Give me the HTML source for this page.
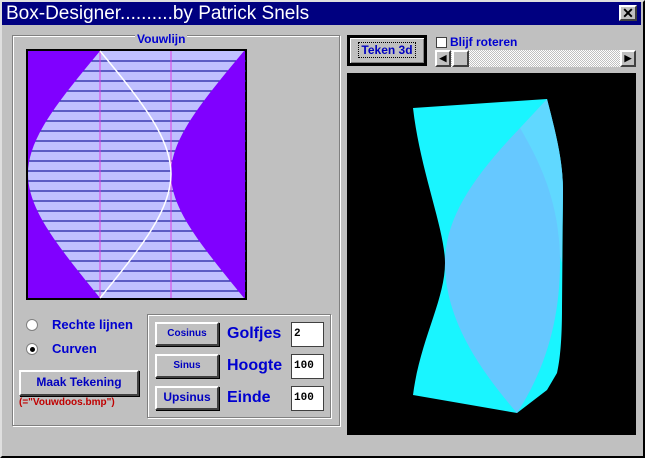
<!DOCTYPE html>
<html><head><style>
*{margin:0;padding:0;box-sizing:border-box}
body{width:645px;height:458px;background:#000;overflow:hidden;font-family:"Liberation Sans",sans-serif;position:relative}
.win{position:absolute;left:0;top:0;width:645px;height:458px;background:#c0c0c0;border:2px solid;border-color:#dfdfdf #000 #000 #dfdfdf}
.in{position:absolute;left:-2px;top:-2px;width:645px;height:458px}
.a{position:absolute}
.title{left:2px;top:2px;width:639px;height:23px;background:#000080;color:#fff;font-size:19px;line-height:23px;padding-left:4px}
.btn{position:absolute;background:#c0c0c0;border:2px solid;border-color:#fff #404040 #404040 #fff;box-shadow:1px 1px 0 #000;color:#0000c0;font-weight:bold;text-align:center;font-size:11px}
.grp{position:absolute;border:1px solid #808080;box-shadow:1px 1px 0 #fff,inset 1px 1px 0 #fff}
.lbl{position:absolute;color:#0000d0;font-weight:bold}
.inp{position:absolute;background:#fff;border:1px solid #404040;width:33px;height:25px;font-size:11px;font-weight:bold;font-family:"Liberation Mono",monospace;padding:5px 2px}
.radio{position:absolute;width:12px;height:12px;border-radius:50%;background:#fff;border:1px solid #808080}
</style></head><body>
<div class="win"><div class="in">
<div class="a title">Box-Designer..........by Patrick Snels</div>
<div class="btn" style="left:619px;top:5px;width:18px;height:16px;color:#000;font-size:14px;line-height:12px;box-shadow:none">✕</div>

<div class="grp" style="left:12px;top:35px;width:328px;height:391px"></div>
<div class="lbl" style="left:135px;top:32px;font-size:12px;background:#c0c0c0;padding:0 2px">Vouwlijn</div>
<svg class="a" style="left:26px;top:49px" width="221" height="251">
<rect x="1" y="1" width="219" height="249" fill="#c0c0ff" stroke="#000" stroke-width="2"/>
<g stroke="#2020a0" stroke-width="1.3">
<line x1="2" x2="220" y1="12" y2="12"/><line x1="2" x2="220" y1="22" y2="22"/><line x1="2" x2="220" y1="32" y2="32"/><line x1="2" x2="220" y1="42" y2="42"/><line x1="2" x2="220" y1="52" y2="52"/><line x1="2" x2="220" y1="62" y2="62"/><line x1="2" x2="220" y1="72" y2="72"/><line x1="2" x2="220" y1="82" y2="82"/><line x1="2" x2="220" y1="92" y2="92"/><line x1="2" x2="220" y1="102" y2="102"/><line x1="2" x2="220" y1="112" y2="112"/><line x1="2" x2="220" y1="122" y2="122"/><line x1="2" x2="220" y1="132" y2="132"/><line x1="2" x2="220" y1="142" y2="142"/><line x1="2" x2="220" y1="152" y2="152"/><line x1="2" x2="220" y1="162" y2="162"/><line x1="2" x2="220" y1="172" y2="172"/><line x1="2" x2="220" y1="182" y2="182"/><line x1="2" x2="220" y1="192" y2="192"/><line x1="2" x2="220" y1="202" y2="202"/><line x1="2" x2="220" y1="212" y2="212"/><line x1="2" x2="220" y1="222" y2="222"/><line x1="2" x2="220" y1="232" y2="232"/><line x1="2" x2="220" y1="242" y2="242"/>
</g>
<path d="M2 2 L74 2 C30 55 2 90 2 125 C2 160 30 195 74 249 L2 249Z" fill="#8000ff"/>
<path d="M219 2 L218 2 C174 55 145 90 145 125 C145 160 174 195 218 249 L219 249Z" fill="#8000ff"/>
<line x1="74" y1="2" x2="74" y2="249" stroke="#e040e0"/>
<line x1="145" y1="2" x2="145" y2="249" stroke="#e040e0"/>
<path d="M74 2 C118 55 145 90 145 125 C145 160 118 195 74 249" fill="none" stroke="#fff" stroke-width="1.5"/>
</svg>

<div class="radio" style="left:26px;top:319px"></div>
<div class="lbl" style="left:52px;top:317px;font-size:13px">Rechte lijnen</div>
<div class="radio" style="left:26px;top:343px"></div>
<div class="a" style="left:30px;top:347px;width:5px;height:5px;border-radius:50%;background:#000"></div>
<div class="lbl" style="left:52px;top:341px;font-size:13px">Curven</div>
<div class="btn" style="left:19px;top:370px;width:120px;height:26px;font-size:12px;line-height:21px">Maak Tekening</div>
<div class="a" style="left:19px;top:397px;color:#c00000;font-size:10px;font-weight:bold">(="Vouwdoos.bmp")</div>

<div class="grp" style="left:147px;top:314px;width:184px;height:104px"></div>
<div class="btn" style="left:155px;top:322px;width:64px;height:24px;line-height:19px;font-size:10px">Cosinus</div>
<div class="btn" style="left:155px;top:354px;width:64px;height:24px;line-height:19px;font-size:10px">Sinus</div>
<div class="btn" style="left:155px;top:386px;width:64px;height:24px;line-height:19px;font-size:12px">Upsinus</div>
<div class="lbl" style="left:227px;top:325px;font-size:16px">Golfjes</div>
<div class="lbl" style="left:227px;top:357px;font-size:16px">Hoogte</div>
<div class="lbl" style="left:227px;top:389px;font-size:16px">Einde</div>
<div class="inp" style="left:291px;top:322px">2</div>
<div class="inp" style="left:291px;top:354px">100</div>
<div class="inp" style="left:291px;top:386px">100</div>

<div class="btn" style="left:347px;top:35px;width:80px;height:31px;border:3px solid #000;box-shadow:inset 1px 1px 0 #fff,inset -1px -1px 0 #808080;line-height:24px;font-size:12px"><span style="border:1px dotted #000;padding:0 2px">Teken 3d</span></div>
<div class="a" style="left:436px;top:37px;width:11px;height:11px;background:#fff;border:1px solid #404040"></div>
<div class="lbl" style="left:450px;top:35px;font-size:12px">Blijf roteren</div>
<div class="a" style="left:435px;top:50px;width:201px;height:17px;background:repeating-conic-gradient(#c0c0c0 0 25%,#fff 0 50%) 0 0/2px 2px"></div>
<div class="btn" style="left:435px;top:50px;width:16px;height:17px;box-shadow:none;font-size:9px;color:#000;line-height:13px">◀</div>
<div class="btn" style="left:452px;top:50px;width:17px;height:17px;box-shadow:none"></div>
<div class="btn" style="left:620px;top:50px;width:16px;height:17px;box-shadow:none;font-size:9px;color:#000;line-height:13px">▶</div>

<svg class="a" style="left:347px;top:73px" width="289" height="362">
<rect width="289" height="362" fill="#000"/>
<g transform="translate(-347 -73)">
<path d="M413 108 L547 99 C555 130 563 160 563 190 L562 307 C562 340 560 360 557 373 L547 390 L517 413 L413 395 C420 340 445 300 445 263 C445 230 420 170 413 108Z" fill="#19f5ff"/>
<path d="M520 128 L547 99 C555 130 563 160 563 190 L562 263Z" fill="#60d8ff"/>
<path d="M520 128 C470 180 445 220 445 263 C445 320 480 370 517 413 C545 370 560 320 560 263 C560 210 545 170 520 128Z" fill="#66c8ff"/>
</g>
</svg>
</div></div>
</body></html>
